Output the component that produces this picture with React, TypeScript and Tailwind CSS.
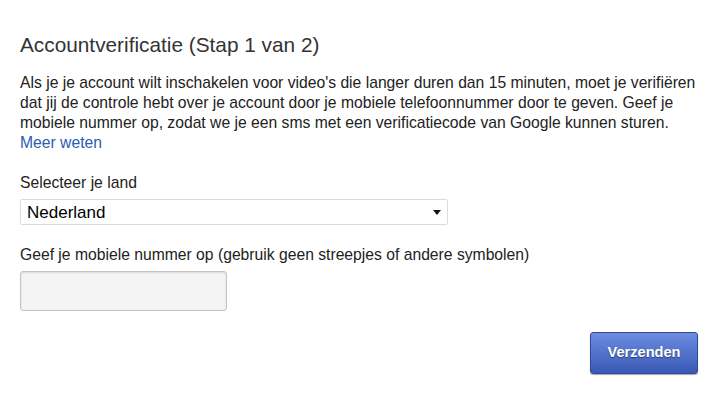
import { useState } from "react";

export default function App() {
  const [country, setCountry] = useState("NL");
  const [phone, setPhone] = useState("");

  return (
    <div className="min-h-screen w-[719px] h-[399px] bg-white px-[20px] pt-[31px] text-[#333] font-['Liberation_Sans',Arial,sans-serif]">
      <h1 className="text-[20.8px] leading-[28px] text-[#333]">Accountverificatie (Stap 1 van 2)</h1>

      <p className="mt-[14px] text-[15.7px] leading-[20px] text-[#222] whitespace-nowrap">
        Als je je account wilt inschakelen voor video's die langer duren dan 15 minuten, moet je verifiëren
        <br />
        dat jij de controle hebt over je account door je mobiele telefoonnummer door te geven. Geef je
        <br />
        mobiele nummer op, zodat we je een sms met een verificatiecode van Google kunnen sturen.
        <br />
        <a href="#" className="text-[#2a5db0]">Meer weten</a>
      </p>

      <label className="block mt-[20px] text-[15.7px] leading-[20px] text-[#222]">Selecteer je land</label>
      <div className="relative mt-[6px] w-[428px] h-[26px] border border-[#d9dbe3] rounded-[2px] bg-white">
        <select
          value={country}
          onChange={(e) => setCountry(e.target.value)}
          className="appearance-none w-full h-full pl-[6px] text-[17px] text-black bg-transparent outline-none"
        >
          <option value="NL">Nederland</option>
          <option value="BE">België</option>
        </select>
        <svg className="absolute right-[6px] top-[10px] w-[8px] h-[5px]" viewBox="0 0 8 5">
          <path d="M0 0h8L4 5z" fill="#111" />
        </svg>
      </div>

      <label className="block mt-[20px] text-[15.7px] leading-[20px] text-[#222]">
        Geef je mobiele nummer op (gebruik geen streepjes of andere symbolen)
      </label>
      <input
        value={phone}
        onChange={(e) => setPhone(e.target.value)}
        className="block mt-[6px] w-[207px] h-[40px] rounded-[3px] border border-[#c4c4c4] bg-[#f4f4f4] shadow-[inset_0_1px_2px_rgba(0,0,0,0.12)] outline-none px-2"
      />

      <div className="flex justify-end pr-[1px] mt-[21px]">
        <button className="w-[108px] h-[42px] rounded-[3px] border border-[#30479a] bg-gradient-to-b from-[#6d8de2] to-[#3a58b4] shadow-[0_1px_1px_rgba(0,0,0,0.35)] text-white text-[14.6px] font-bold [text-shadow:0_1px_1px_rgba(0,0,0,0.45)]">
          Verzenden
        </button>
      </div>
    </div>
  );
}
